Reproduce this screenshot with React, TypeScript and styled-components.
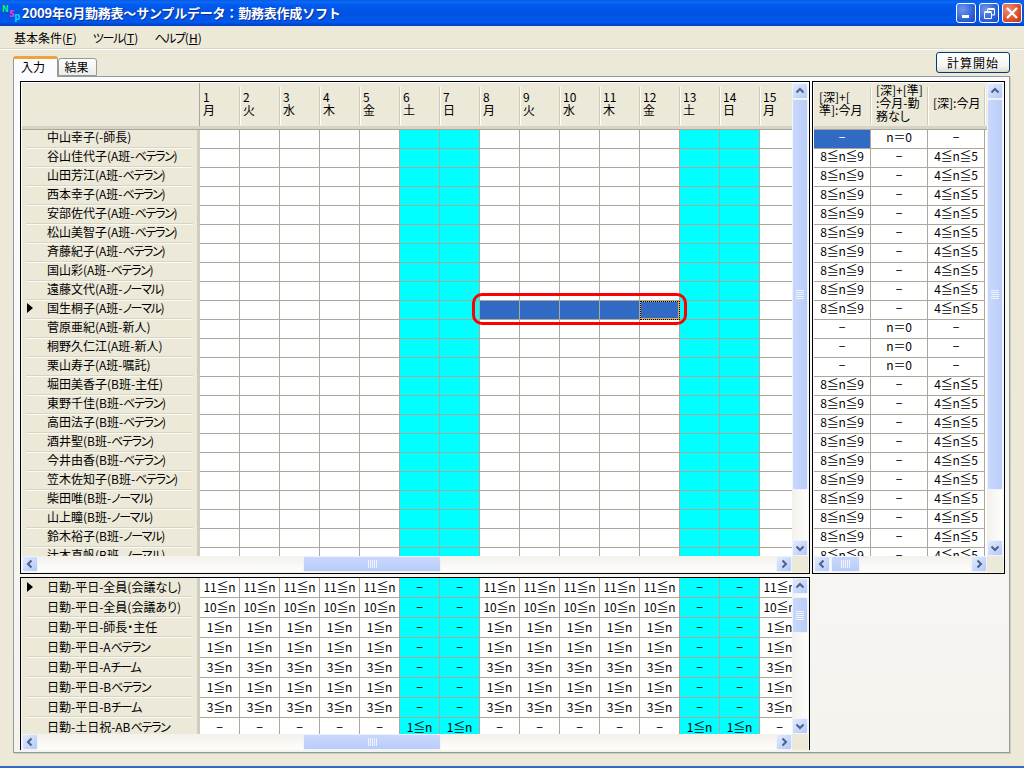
import * as React from "react";
import styled, { createGlobalStyle } from "styled-components";

const GRID_LINE = "#aca899";
const FACE = "#ece9d8";
const SELECT = "#316ac5";

const GlobalStyle = createGlobalStyle`
  html, body {
    margin: 0;
    padding: 0;
    width: 1024px;
    height: 768px;
    overflow: hidden;
  }
  * {
    box-sizing: border-box;
  }
  body {
    font-family: "Noto Sans CJK JP", "Liberation Sans", sans-serif;
    font-size: 12px;
    font-feature-settings: "palt";
    -webkit-font-smoothing: none;
    color: #000;
  }
`;

const Window = styled.div`
  display: flex;
  flex-direction: column;
  width: 1024px;
  height: 768px;
  background: ${FACE};
  border-bottom: 2px solid #3169c6;
`;

const TitleBar = styled.header`
  display: flex;
  align-items: center;
  flex: none;
  height: 26px;
  padding: 0 2px 0 2px;
  background: linear-gradient(180deg, #0a5be6 0%, #0a6af5 8%, #0058ee 20%, #0054e3 55%, #0058ee 85%, #003dc0 100%);
`;

const AppIcon = styled.span`
  display: flex;
  flex: none;
  width: 19px;
  height: 22px;
  font-size: 9px;
  font-weight: 700;
  line-height: 9px;
`;

const AppLetter = styled.span<{ $color: string; $top: number }>`
  color: ${(p) => p.$color};
  margin-top: ${(p) => p.$top}px;
`;

const Title = styled.span`
  flex: 1;
  margin-left: 1px;
  padding-bottom: 1px;
  color: #fff;
  font-size: 13px;
  font-weight: 700;
  font-feature-settings: normal;
  letter-spacing: -0.2px;
  text-shadow: 1px 1px 0 #0f2f8f;
  white-space: nowrap;
`;

const CaptionButtons = styled.div`
  display: flex;
  flex: none;
  gap: 3px;
`;

const CaptionButton = styled.div<{ $close?: boolean }>`
  display: flex;
  align-items: center;
  justify-content: center;
  width: 20px;
  height: 20px;
  border: 1px solid #fff;
  border-radius: 3px;
  background: ${(p) =>
    p.$close
      ? "radial-gradient(circle at 30% 30%, #e9907a, #d9512b 60%, #b8330f)"
      : "radial-gradient(circle at 30% 30%, #6e96ee, #2f62d8 60%, #1d47c0)"};
`;

const MenuBar = styled.nav`
  display: flex;
  flex: none;
  align-items: center;
  gap: 16px;
  height: 24px;
  padding: 0 0 0 14px;
  border-bottom: 1px solid #fff;
  box-shadow: inset 0 -1px 0 #d8d4c5;
`;

const MenuItem = styled.span`
  white-space: nowrap;
  u {
    text-underline-offset: 1px;
  }
`;

const Kana = styled.span`
  letter-spacing: -1.3px;
`;

const Content = styled.main`
  display: flex;
  flex-direction: column;
  flex: 1;
  min-height: 0;
  padding: 0 14px 13px 13px;
`;

const TabStrip = styled.div`
  display: flex;
  flex: none;
  align-items: flex-end;
  height: 26px;
  position: relative;
  z-index: 1;
`;

const Tab = styled.div<{ $active?: boolean }>`
  display: flex;
  align-items: center;
  justify-content: center;
  height: ${(p) => (p.$active ? "21px" : "18px")};
  width: ${(p) => (p.$active ? "45px" : "39px")};
  margin-bottom: ${(p) => (p.$active ? "-1px" : "0")};
  padding: ${(p) => (p.$active ? "0 5px 3px 0" : "0 2px 2px 0")};
  border: 1px solid #919b9c;
  border-bottom: ${(p) => (p.$active ? "none" : "1px solid #919b9c")};
  border-top: ${(p) => (p.$active ? "3px solid #f0a33a" : "1px solid #919b9c")};
  border-radius: 3px 3px 0 0;
  background: ${(p) => (p.$active ? "#fcfcfe" : "linear-gradient(180deg, #fff, #ecebe4)")};
`;

const StartButton = styled.button`
  width: 74px;
  height: 21px;
  margin: 0 0 3px auto;
  padding: 0;
  border: 1px solid #003c74;
  border-radius: 3px;
  background: linear-gradient(180deg, #fff 0%, #f4f4f0 70%, #dcd8cc 100%);
  font: inherit;
  font-feature-settings: inherit;
  letter-spacing: 1px;
`;

const Panel = styled.section`
  display: grid;
  grid-template-columns: 790px 193px;
  grid-template-rows: 493px 173px;
  column-gap: 2px;
  row-gap: 3px;
  position: relative;
  flex: 1;
  padding: 4px 0 0 6px;
  border: 1px solid #919b9c;
  box-shadow: 1px 1px 0 #d0cdbf;
  background: linear-gradient(180deg, #fcfcfe 0%, #f4f3ee 100%);
`;

const GridFrame = styled.div<{ $open?: boolean }>`
  display: flex;
  flex-direction: column;
  min-height: 0;
  padding: ${(p) => (p.$open ? "0 1px" : "1px")};
  border: 1px solid #000;
  border-bottom: ${(p) => (p.$open ? "none" : "1px solid #000")};
`;

const GridBody = styled.div`
  display: flex;
  flex: 1;
  min-height: 0;
`;

const Viewport = styled.div`
  flex: 1;
  min-width: 0;
  overflow: hidden;
  background: #fff;
`;

const HeaderRow = styled.div`
  display: flex;
  height: 46px;
  background: ${FACE};
  border-bottom: 3px solid #d8d4c5;
`;

const CornerCell = styled.div`
  flex: none;
  width: 178px;
  border-right: 1px solid ${GRID_LINE};
`;

const HeaderCell = styled.div<{ $width: number }>`
  display: flex;
  flex: none;
  width: ${(p) => p.$width}px;
  padding: 4px 0 1px;
`;

const HeaderLabel = styled.div<{ $inset: number }>`
  display: flex;
  align-items: center;
  flex: 1;
  padding: 0 2px 7px ${(p) => p.$inset}px;
  border-right: 1px solid #cfcbbb;
  box-shadow: 1px 0 0 #fff;
  line-height: 13px;
  white-space: pre-line;
`;

const Row = styled.div<{ $height: number }>`
  display: flex;
  height: ${(p) => p.$height}px;
`;

const RowHeader = styled.div`
  display: flex;
  flex: none;
  width: 178px;
  padding: 0 4px;
  background: ${FACE};
  border-right: 3px solid #d0ccbc;
`;

const RowLabel = styled.div<{ $lift: number }>`
  display: flex;
  align-items: center;
  flex: 1;
  min-width: 0;
  padding-bottom: ${(p) => p.$lift}px;
  border-bottom: 1px solid #fbfaf4;
  box-shadow: inset 0 -1px 0 #d8d4c5;
  white-space: nowrap;
`;

const Marker = styled.span<{ $on?: boolean }>`
  flex: none;
  width: 6px;
  height: 10px;
  margin: 2px 14px 0 1px;
  border-style: solid;
  border-width: 5px 0 5px 6px;
  border-color: transparent transparent transparent ${(p) => (p.$on ? "#000" : "transparent")};
`;

const Cell = styled.div<{ $width: number; $lift: number; $tone?: "weekend" | "selected"; $focus?: boolean }>`
  display: flex;
  align-items: center;
  justify-content: center;
  flex: none;
  width: ${(p) => p.$width}px;
  padding-bottom: ${(p) => p.$lift}px;
  border-right: 1px solid ${GRID_LINE};
  border-bottom: 1px solid ${GRID_LINE};
  background: ${(p) => (p.$tone === "weekend" ? "#00ffff" : p.$tone === "selected" ? SELECT : "#fff")};
  color: ${(p) => (p.$tone === "selected" ? "#fff" : "#000")};
  box-shadow: ${(p) => (p.$focus ? "inset 0 0 0 1px #f0a33a" : "none")};
  outline: ${(p) => (p.$focus ? "1px dotted #000" : "none")};
  outline-offset: -1px;
  letter-spacing: -0.2px;
  white-space: nowrap;
`;

const TopGap = styled.div`
  height: 1px;
  background: ${GRID_LINE};
`;

const VTrack = styled.div`
  display: flex;
  flex-direction: column;
  flex: none;
  width: 16px;
  background: linear-gradient(90deg, #f3f1ec, #fefefb);
`;

const HTrack = styled.div`
  display: flex;
  flex: 1;
  min-width: 0;
  height: 16px;
  background: linear-gradient(180deg, #f3f1ec, #fefefb);
`;

const HBar = styled.div`
  display: flex;
  flex: none;
  height: 16px;
`;

const ScrollCorner = styled.div`
  flex: none;
  width: 16px;
  background: ${FACE};
`;

const Arrow = styled.div`
  display: flex;
  align-items: center;
  justify-content: center;
  flex: none;
  width: 16px;
  height: 16px;
  border: 1px solid #eef3fe;
  border-radius: 2px;
  background: linear-gradient(135deg, #e1eafe, #b4c9f8);
`;

const Spring = styled.div`
  flex: 1;
  min-width: 0;
  min-height: 0;
`;

const VThumb = styled.div<{ $top: number; $size: number }>`
  display: flex;
  align-items: center;
  justify-content: center;
  flex: none;
  height: ${(p) => p.$size}px;
  margin-top: ${(p) => p.$top}px;
  border: 1px solid #eef3fe;
  border-radius: 2px;
  background: linear-gradient(90deg, #c9d7fb, #b9cdf9);
`;

const HThumb = styled.div<{ $left: number; $size: number }>`
  display: flex;
  align-items: center;
  justify-content: center;
  flex: none;
  width: ${(p) => p.$size}px;
  margin-left: ${(p) => p.$left}px;
  border: 1px solid #eef3fe;
  border-radius: 2px;
  background: linear-gradient(180deg, #c9d7fb, #b9cdf9);
`;

// red marker the author drew on top of the selected cells
const Highlight = styled.div`
  position: absolute;
  left: 458px;
  top: 216px;
  width: 215px;
  height: 32px;
  border: 3px solid #f00;
  border-radius: 10px;
  pointer-events: none;
`;

const Chevron = ({ dir }: { dir: "up" | "down" | "left" | "right" }) => {
  const d = {
    up: "M1.5 6.5 L5 3 L8.5 6.5",
    down: "M1.5 3.5 L5 7 L8.5 3.5",
    left: "M6.5 1.5 L3 5 L6.5 8.5",
    right: "M3.5 1.5 L7 5 L3.5 8.5",
  }[dir];
  return (
    <svg width="10" height="10" viewBox="0 0 10 10">
      <path d={d} fill="none" stroke="#4d6185" strokeWidth="2" />
    </svg>
  );
};

const Grip = ({ vertical }: { vertical?: boolean }) => (
  <svg width={vertical ? 8 : 9} height={vertical ? 9 : 8} viewBox={vertical ? "0 0 8 9" : "0 0 9 8"}>
    {[0, 2, 4, 6, 8].map((n) =>
      vertical ? (
        <rect key={n} x="0" y={n} width="8" height="1" fill="#eef3fe" />
      ) : (
        <rect key={n} x={n} y="0" width="1" height="8" fill="#eef3fe" />
      ),
    )}
  </svg>
);

const VScroll = ({ top, size }: { top: number; size: number }) => (
  <VTrack>
    <Arrow>
      <Chevron dir="up" />
    </Arrow>
    <VThumb $top={top} $size={size}>
      <Grip vertical />
    </VThumb>
    <Spring />
    <Arrow>
      <Chevron dir="down" />
    </Arrow>
  </VTrack>
);

const HScroll = ({ left, size }: { left: number; size: number }) => (
  <HBar>
    <HTrack>
      <Arrow>
        <Chevron dir="left" />
      </Arrow>
      <HThumb $left={left} $size={size}>
        <Grip />
      </HThumb>
      <Spring />
      <Arrow>
        <Chevron dir="right" />
      </Arrow>
    </HTrack>
    <ScrollCorner />
  </HBar>
);

// katakana sits narrower in the original UI font
const withKana = (text: string) =>
  text.split(/([ァ-ヶー]+)/).map((part, i) => (i % 2 ? <Kana key={i}>{part}</Kana> : part));

const staff = [
  "中山幸子(-師長)",
  "谷山佳代子(A班-ベテラン)",
  "山田芳江(A班-ベテラン)",
  "西本幸子(A班-ベテラン)",
  "安部佐代子(A班-ベテラン)",
  "松山美智子(A班-ベテラン)",
  "斉藤紀子(A班-ベテラン)",
  "国山彩(A班-ベテラン)",
  "遠藤文代(A班-ノーマル)",
  "国生桐子(A班-ノーマル)",
  "菅原亜紀(A班-新人)",
  "桐野久仁江(A班-新人)",
  "栗山寿子(A班-嘱託)",
  "堀田美香子(B班-主任)",
  "東野千佳(B班-ベテラン)",
  "高田法子(B班-ベテラン)",
  "酒井聖(B班-ベテラン)",
  "今井由香(B班-ベテラン)",
  "笠木佐知子(B班-ベテラン)",
  "柴田唯(B班-ノーマル)",
  "山上瞳(B班-ノーマル)",
  "鈴木裕子(B班-ノーマル)",
  "辻本真帆(B班-ノーマル)",
];

const shifts: [string, string, string][] = [
  ["日勤-平日-全員(会議なし)", "11≦n", "−"],
  ["日勤-平日-全員(会議あり)", "10≦n", "−"],
  ["日勤-平日-師長・主任", "1≦n", "−"],
  ["日勤-平日-Aベテラン", "1≦n", "−"],
  ["日勤-平日-Aチーム", "3≦n", "−"],
  ["日勤-平日-Bベテラン", "1≦n", "−"],
  ["日勤-平日-Bチーム", "3≦n", "−"],
  ["日勤-土日祝-ABベテラン", "−", "1≦n"],
];

const WEEK = ["月", "火", "水", "木", "金", "土", "日"];
const days = Array.from({ length: 15 }, (_, i) => ({
  day: i + 1,
  label: WEEK[i % 7],
  weekend: i % 7 >= 5,
}));

const SELECTED_ROW = 9;
const noneRows = [0, 10, 11, 12];

const summaryHeaders = ["[深]+[\n準]:今月", "[深]+[準]\n:今月-勤\n務なし", "[深]:今月"];

export default function App(): JSX.Element {
  return (
    <>
      <GlobalStyle />
      <Window>
        <TitleBar>
          <AppIcon>
            <AppLetter $color="#00ff66" $top={2}>N</AppLetter>
            <AppLetter $color="#ff33cc" $top={7}>S</AppLetter>
            <AppLetter $color="#00e5ff" $top={10}>p</AppLetter>
          </AppIcon>
          <Title>2009年6月勤務表～サンプルデータ：勤務表作成ソフト</Title>
          <CaptionButtons>
            <CaptionButton>
              <svg width="12" height="12" viewBox="0 0 12 12">
                <rect x="2" y="8" width="7" height="3" fill="#fff" />
              </svg>
            </CaptionButton>
            <CaptionButton>
              <svg width="14" height="14" viewBox="0 0 14 14">
                <path d="M5.5 3.5 H12.5 V9 H10 M5.5 3.5 V5.5 M5.5 2.5 H12.5" fill="none" stroke="#fff" />
                <path d="M2.5 6.5 H9.5 V12.5 H2.5 Z M2.5 5.5 H9.5" fill="none" stroke="#fff" />
              </svg>
            </CaptionButton>
            <CaptionButton $close>
              <svg width="14" height="14" viewBox="0 0 14 14">
                <path d="M2 2 L12 12 M12 2 L2 12" stroke="#fff" strokeWidth="2.2" fill="none" />
              </svg>
            </CaptionButton>
          </CaptionButtons>
        </TitleBar>

        <MenuBar>
          <MenuItem>基本条件(<u>F</u>)</MenuItem>
          <MenuItem>{withKana("ツール")}(<u>T</u>)</MenuItem>
          <MenuItem>{withKana("ヘルプ")}(<u>H</u>)</MenuItem>
        </MenuBar>

        <Content>
          <TabStrip>
            <Tab $active>入力</Tab>
            <Tab>結果</Tab>
            <StartButton>計算開始</StartButton>
          </TabStrip>

          <Panel>
            <GridFrame>
              <GridBody>
                <Viewport>
                  <HeaderRow>
                    <CornerCell />
                    {days.map((d) => (
                      <HeaderCell key={d.day} $width={40}>
                        <HeaderLabel $inset={3}>{`${d.day}\n${d.label}`}</HeaderLabel>
                      </HeaderCell>
                    ))}
                  </HeaderRow>
                  <TopGap />
                  {staff.map((name, r) => (
                    <Row key={name} $height={19}>
                      <RowHeader>
                        <RowLabel $lift={6}>
                          <Marker $on={r === SELECTED_ROW} />
                          <span>{withKana(name)}</span>
                        </RowLabel>
                      </RowHeader>
                      {days.map((d) => {
                        const selected = r === SELECTED_ROW && d.day >= 8 && d.day <= 12;
                        return (
                          <Cell
                            key={d.day}
                            $width={40}
                            $lift={5}
                            $tone={selected ? "selected" : d.weekend ? "weekend" : undefined}
                            $focus={selected && d.day === 12}
                          />
                        );
                      })}
                    </Row>
                  ))}
                </Viewport>
                <VScroll top={0} size={391} />
              </GridBody>
              <HScroll left={265} size={138} />
            </GridFrame>

            <GridFrame>
              <GridBody>
                <Viewport>
                  <HeaderRow>
                    {summaryHeaders.map((h) => (
                      <HeaderCell key={h} $width={57}>
                        <HeaderLabel $inset={5}>{h}</HeaderLabel>
                      </HeaderCell>
                    ))}
                  </HeaderRow>
                  <TopGap />
                  {staff.map((name, r) => {
                    const none = noneRows.includes(r);
                    return (
                      <Row key={name} $height={19}>
                        <Cell $width={57} $lift={5} $tone={r === 0 ? "selected" : undefined}>
                          {none ? "−" : "8≦n≦9"}
                        </Cell>
                        <Cell $width={57} $lift={5}>{none ? "n＝0" : "−"}</Cell>
                        <Cell $width={57} $lift={5}>{none ? "−" : "4≦n≦5"}</Cell>
                      </Row>
                    );
                  })}
                </Viewport>
                <VScroll top={0} size={391} />
              </GridBody>
              <HScroll left={1} size={29} />
            </GridFrame>

            <GridFrame $open>
              <GridBody>
                <Viewport>
                  {shifts.map(([name, weekday, weekend], r) => (
                    <Row key={name} $height={20}>
                      <RowHeader>
                        <RowLabel $lift={3}>
                          <Marker $on={r === 0} />
                          <span>{withKana(name)}</span>
                        </RowLabel>
                      </RowHeader>
                      {days.map((d) => (
                        <Cell key={d.day} $width={40} $lift={2} $tone={d.weekend ? "weekend" : undefined}>
                          {d.weekend ? weekend : weekday}
                        </Cell>
                      ))}
                    </Row>
                  ))}
                </Viewport>
                <VScroll top={3} size={36} />
              </GridBody>
              <HScroll left={265} size={138} />
            </GridFrame>

            <Highlight />
          </Panel>
        </Content>
      </Window>
    </>
  );
}
